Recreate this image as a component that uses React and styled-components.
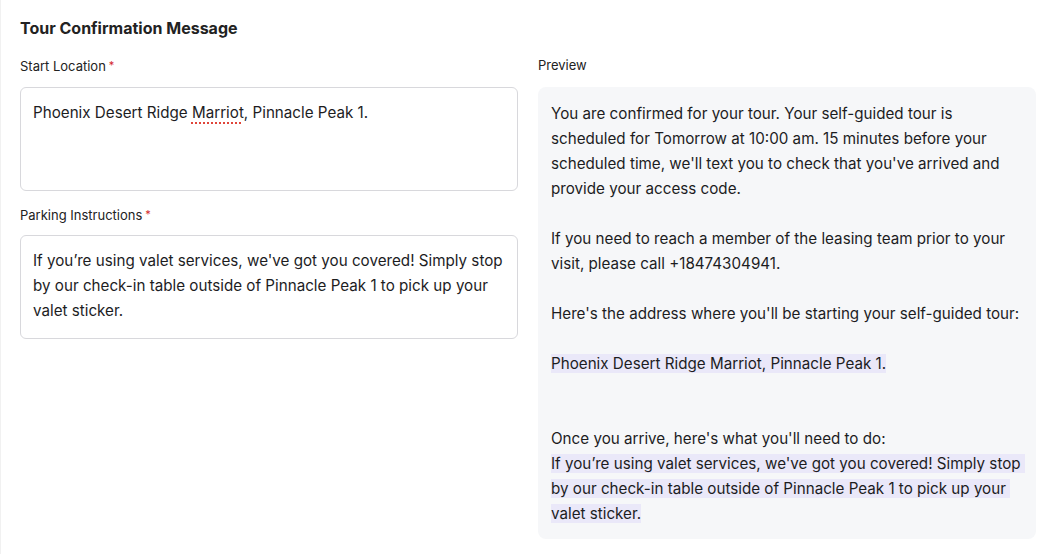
import React from "react";
import styled, { createGlobalStyle } from "styled-components";

const Global = createGlobalStyle`
  html, body { margin: 0; padding: 0; background: #ffffff; }
  body {
    font-family: Inter, "Noto Sans", "Liberation Sans", sans-serif;
    color: #1d1d1f;
    -webkit-font-smoothing: antialiased;
  }
  * { box-sizing: border-box; }
`;

const Page = styled.div`
  width: 1054px;
  height: 554px;
  padding: 18px 18px 0 19px;
  border-left: 1px solid #f1f1f1;
`;

const Title = styled.h2`
  margin: 0 0 19px 0;
  font-size: 16px;
  line-height: 20px;
  font-weight: 700;
  color: #222;
`;

const Columns = styled.div`
  display: grid;
  grid-template-columns: 498px 498px;
  column-gap: 20px;
  align-items: start;
`;

const Column = styled.div`
  display: flex;
  flex-direction: column;
`;

const Field = styled.div`
  display: flex;
  flex-direction: column;
  gap: ${(p) => p.$gap || 13}px;
  margin-bottom: ${(p) => p.$mb || 0}px;
`;

const Label = styled.label`
  font-size: 13px;
  line-height: 16px;
  color: #222;
`;

const Required = styled.span`
  color: #d4282b;
  font-size: 11px;
  margin-left: 3px;
  vertical-align: 2px;
`;

const TextBox = styled.div`
  border: 1px solid #d8d8dc;
  border-radius: 6px;
  height: ${(p) => p.$h}px;
  padding: 12px 12px;
  font-size: 15.2px;
  line-height: 25px;
  color: #1d1d1f;
  white-space: pre-wrap;
  background: #fff;
`;

const Misspelled = styled.span`
  text-decoration: underline dotted #e0453a;
  text-decoration-thickness: 1.5px;
  text-underline-offset: 4px;
`;

const PreviewBox = styled.div`
  background: #f6f7f9;
  border-radius: 8px;
  padding: 14px 13px 13px 13px;
  font-size: 15.2px;
  line-height: 25px;
  color: #1d1d1f;
  white-space: pre-wrap;
`;

const Highlight = styled.span`
  background: #eae8f9;
`;

export default function App() {
  return (
    <>
      <Global />
      <Page>
        <Title>Tour Confirmation Message</Title>
        <Columns>
          <Column>
            <Field $mb={15}>
              <Label>
                Start Location<Required>*</Required>
              </Label>
              <TextBox $h={104} role="textbox">
                Phoenix Desert Ridge <Misspelled>Marriot</Misspelled>, Pinnacle Peak 1.
              </TextBox>
            </Field>
            <Field $gap={12}>
              <Label>
                Parking Instructions<Required>*</Required>
              </Label>
              <TextBox $h={104} role="textbox">
                If you’re using valet services, we've got you covered! Simply stop by our check-in table outside of Pinnacle Peak 1 to pick up your valet sticker.
              </TextBox>
            </Field>
          </Column>
          <Column>
            <Field $gap={14}>
              <Label>Preview</Label>
              <PreviewBox>
                {"You are confirmed for your tour. Your self-guided tour is scheduled for Tomorrow at 10:00 am. 15 minutes before your scheduled time, we'll text you to check that you've arrived and provide your access code.\n\nIf you need to reach a member of the leasing team prior to your visit, please call +18474304941.\n\nHere's the address where you'll be starting your self-guided tour:\n\n"}
                <Highlight>Phoenix Desert Ridge Marriot, Pinnacle Peak 1.</Highlight>
                {"\n\n\nOnce you arrive, here's what you'll need to do:\n"}
                <Highlight>
                  If you’re using valet services, we've got you covered! Simply stop by our check-in table outside of Pinnacle Peak 1 to pick up your valet sticker.
                </Highlight>
              </PreviewBox>
            </Field>
          </Column>
        </Columns>
      </Page>
    </>
  );
}
